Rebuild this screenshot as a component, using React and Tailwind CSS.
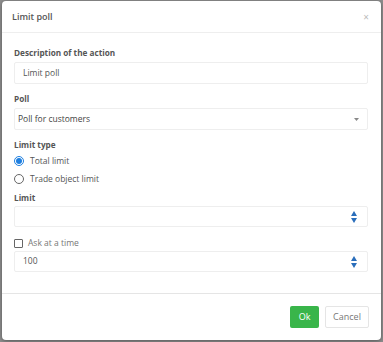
import React from 'react';

function Spinner() {
  return (
    <div className="flex flex-col items-center gap-[2px] text-[#2a6ebb]">
      <svg width="6" height="5" viewBox="0 0 6 5"><path d="M3 0L6 5H0z" fill="currentColor" /></svg>
      <svg width="6" height="5" viewBox="0 0 6 5"><path d="M0 0h6L3 5z" fill="currentColor" /></svg>
    </div>
  );
}

function Label({ children }) {
  return <div className="h-[14px] flex items-center text-[8.2px] font-bold text-[#555]">{children}</div>;
}

export default function App() {
  return (
    <div
      className="w-[383px] h-[342px] bg-[#8e8e8e] pl-[2px] pt-[1px]"
      style={{ fontFamily: '"Open Sans", sans-serif' }}
    >
      <div className="w-[379px] h-[339px] bg-white rounded-[4px] flex flex-col shadow-[0_1px_4px_rgba(0,0,0,0.4)]">
        <div className="h-[32px] pl-[10px] pr-[12px] flex items-center justify-between border-b border-[#eeeeee]">
          <span className="text-[9px] font-semibold text-[#555]">Limit poll</span>
          <span className="text-[10px] text-[#bbb] leading-none">×</span>
        </div>

        <div className="flex-1 pl-[12px] pr-[13px] pt-[13px]">
          <Label>Description of the action</Label>
          <div className="mt-[2px] h-[22px] border border-[#eeeeee] rounded-[2px] flex items-center px-[8px] text-[8.5px] text-[#555]">
            Limit poll
          </div>

          <div className="mt-[8px]"><Label>Poll</Label></div>
          <div className="mt-[2px] h-[22px] border border-[#eeeeee] rounded-[2px] flex items-center justify-between pl-[3px] pr-[8px] text-[8.5px] text-[#444]">
            <span>Poll for customers</span>
            <svg width="5" height="3" viewBox="0 0 5 3"><path d="M0 0h5L2.5 3z" fill="#888" /></svg>
          </div>

          <div className="mt-[8px]"><Label>Limit type</Label></div>
          <div className="mt-[2px] h-[14px] flex items-center gap-[6px] text-[8.5px] text-[#555]">
            <span className="w-[10px] h-[10px] rounded-full border border-[#1e7fe0] flex items-center justify-center">
              <span className="w-[6px] h-[6px] rounded-full bg-[#1e7fe0]" />
            </span>
            Total limit
          </div>
          <div className="mt-[4px] h-[14px] flex items-center gap-[6px] text-[8.5px] text-[#555]">
            <span className="w-[10px] h-[10px] rounded-full border border-[#666]" />
            Trade object limit
          </div>

          <div className="mt-[5px]"><Label>Limit</Label></div>
          <div className="mt-[1px] h-[21px] border border-[#eeeeee] rounded-[2px] flex items-center justify-end pr-[10px]">
            <Spinner />
          </div>

          <div className="mt-[10px] h-[13px] flex items-center gap-[5px] text-[8.5px] text-[#777]">
            <span className="w-[9px] h-[9px] border border-[#666] rounded-[1px]" />
            Ask at a time
          </div>
          <div className="mt-[1px] h-[21px] border border-[#eeeeee] rounded-[2px] flex items-center justify-between pl-[8px] pr-[10px] text-[8.5px] text-[#555]">
            <span>100</span>
            <Spinner />
          </div>
        </div>

        <div className="h-[47px] border-t border-[#e5e5e5] flex items-center justify-end gap-[6px] pr-[12px] pb-[1px]">
          <button className="h-[22px] w-[29px] rounded-[2px] bg-[#39b54a] text-white text-[9px]">Ok</button>
          <button className="h-[22px] w-[44px] rounded-[2px] border border-[#e5e5e5] bg-white text-[#777] text-[9px]">Cancel</button>
        </div>
      </div>
    </div>
  );
}
